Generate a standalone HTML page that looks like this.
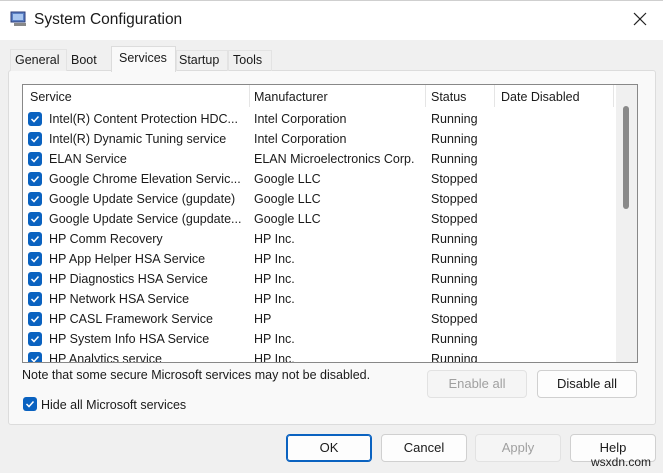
<!DOCTYPE html><html><head><style>
*{box-sizing:border-box;margin:0;padding:0}
body{width:663px;height:473px;overflow:hidden;background:#f0f0f0;font-family:"Liberation Sans",sans-serif;font-size:12.5px;color:#1a1a1a;position:relative}
.a{position:absolute;white-space:nowrap}
.title{left:0;top:0;width:663px;height:40px;background:#fff;border-top:1px solid #cfcfcf}
.cb{position:absolute;width:14px;height:14px;background:#0a62c0;border-radius:3px}
.cb svg{position:absolute;left:2px;top:2px}
.btn{position:absolute;height:28px;background:#fdfdfd;border:1px solid #d0d0d0;border-radius:4px;text-align:center;line-height:26px;font-size:13px}
.dis{color:#a0a0a0;background:#f5f5f5;border-color:#e2e2e2}
.row{position:absolute;left:0;height:20px;width:600px}
.row span{position:absolute;top:3px}
</style></head><body>
<div class="a title"></div>
<svg class="a" style="left:10px;top:11px" width="18" height="16"><rect x="1" y="1" width="14" height="10" fill="#5a7fc4" stroke="#2c3e7a"/><rect x="3" y="3" width="10" height="6" fill="#a9c6f0"/><rect x="4" y="12" width="12" height="3" fill="#888"/></svg>
<div class="a" style="left:34px;top:11px;font-size:15.5px">System Configuration</div>
<svg class="a" style="left:633px;top:12px" width="14" height="14"><path d="M1 1L13 13M13 1L1 13" stroke="#222" stroke-width="1.2"/></svg>
<!-- tab panel -->
<div class="a" style="left:8px;top:70px;width:648px;height:355px;background:#f9f9f9;border:1px solid #dcdcdc;border-radius:3px"></div>
<div class="a" style="left:10px;top:49px;width:57px;height:22px;background:#f0f0f0;border:1px solid #e3e3e3;border-bottom:none"></div>
<div class="a" style="left:15px;top:53px">General</div>
<div class="a" style="left:71px;top:53px">Boot</div>
<div class="a" style="left:111px;top:46px;width:65px;height:26px;background:#f9f9f9;border:1px solid #dcdcdc;border-bottom:none"></div>
<div class="a" style="left:119px;top:51px">Services</div>
<div class="a" style="left:176px;top:50px;width:52px;height:21px;border:1px solid #e3e3e3;border-bottom:none"></div>
<div class="a" style="left:179px;top:53px">Startup</div>
<div class="a" style="left:228px;top:50px;width:44px;height:21px;border:1px solid #e3e3e3;border-bottom:none"></div>
<div class="a" style="left:233px;top:53px">Tools</div>
<!-- list -->
<div class="a" style="left:22px;top:84px;width:616px;height:279px;background:#fff;border:1px solid #888;overflow:hidden">
 <div class="a" style="left:226px;top:0;width:1px;height:22px;background:#e5e5e5"></div>
 <div class="a" style="left:402px;top:0;width:1px;height:22px;background:#e5e5e5"></div>
 <div class="a" style="left:471px;top:0;width:1px;height:22px;background:#e5e5e5"></div>
 <div class="a" style="left:590px;top:0;width:1px;height:22px;background:#e5e5e5"></div>
 <div class="a" style="left:7px;top:5px">Service</div>
 <div class="a" style="left:231px;top:5px">Manufacturer</div>
 <div class="a" style="left:408px;top:5px">Status</div>
 <div class="a" style="left:478px;top:5px">Date Disabled</div>
 <div class="a" style="left:593px;top:0;width:22px;height:278px;background:#f0f0f0"></div>
 <div class="a" style="left:600px;top:21px;width:6px;height:103px;background:#8a8a8a;border-radius:3px"></div>
 <div id="rows"></div>
</div>
<div class="a" style="left:22px;top:368px">Note that some secure Microsoft services may not be disabled.</div>
<div class="cb" style="left:23px;top:397px"><svg width="10" height="10"><path d="M1.5 5L4 7.5L8.5 2.5" stroke="#fff" stroke-width="1.5" fill="none"/></svg></div>
<div class="a" style="left:41px;top:398px">Hide all Microsoft services</div>
<div class="btn dis" style="left:427px;top:370px;width:100px">Enable all</div>
<div class="btn" style="left:537px;top:370px;width:100px">Disable all</div>
<div class="btn" style="left:286px;top:434px;width:86px;border:1px solid #0a62c0;box-shadow:inset 0 0 0 1px #0a62c0">OK</div>
<div class="btn" style="left:381px;top:434px;width:86px">Cancel</div>
<div class="btn dis" style="left:475px;top:434px;width:86px">Apply</div>
<div class="btn" style="left:570px;top:434px;width:86px">Help</div>
<div class="a" style="left:591px;top:455px;font-size:12px;color:#222">wsxdn.com</div>
<script>
var d=[["Intel(R) Content Protection HDC...","Intel Corporation","Running"],["Intel(R) Dynamic Tuning service","Intel Corporation","Running"],["ELAN Service","ELAN Microelectronics Corp.","Running"],["Google Chrome Elevation Servic...","Google LLC","Stopped"],["Google Update Service (gupdate)","Google LLC","Stopped"],["Google Update Service (gupdate...","Google LLC","Stopped"],["HP Comm Recovery","HP Inc.","Running"],["HP App Helper HSA Service","HP Inc.","Running"],["HP Diagnostics HSA Service","HP Inc.","Running"],["HP Network HSA Service","HP Inc.","Running"],["HP CASL Framework Service","HP","Stopped"],["HP System Info HSA Service","HP Inc.","Running"],["HP Analytics service","HP Inc.","Running"]];
var h="";d.forEach(function(r,i){h+='<div class="row" style="top:'+(24+i*20)+'px"><div class="cb" style="left:5px;top:3px"><svg width="10" height="10"><path d="M1.5 5L4 7.5L8.5 2.5" stroke="#fff" stroke-width="1.5" fill="none"/></svg></div><span style="left:26px">'+r[0]+'</span><span style="left:231px">'+r[1]+'</span><span style="left:408px">'+r[2]+'</span></div>'});
document.getElementById("rows").innerHTML=h;
</script>
</body></html>
